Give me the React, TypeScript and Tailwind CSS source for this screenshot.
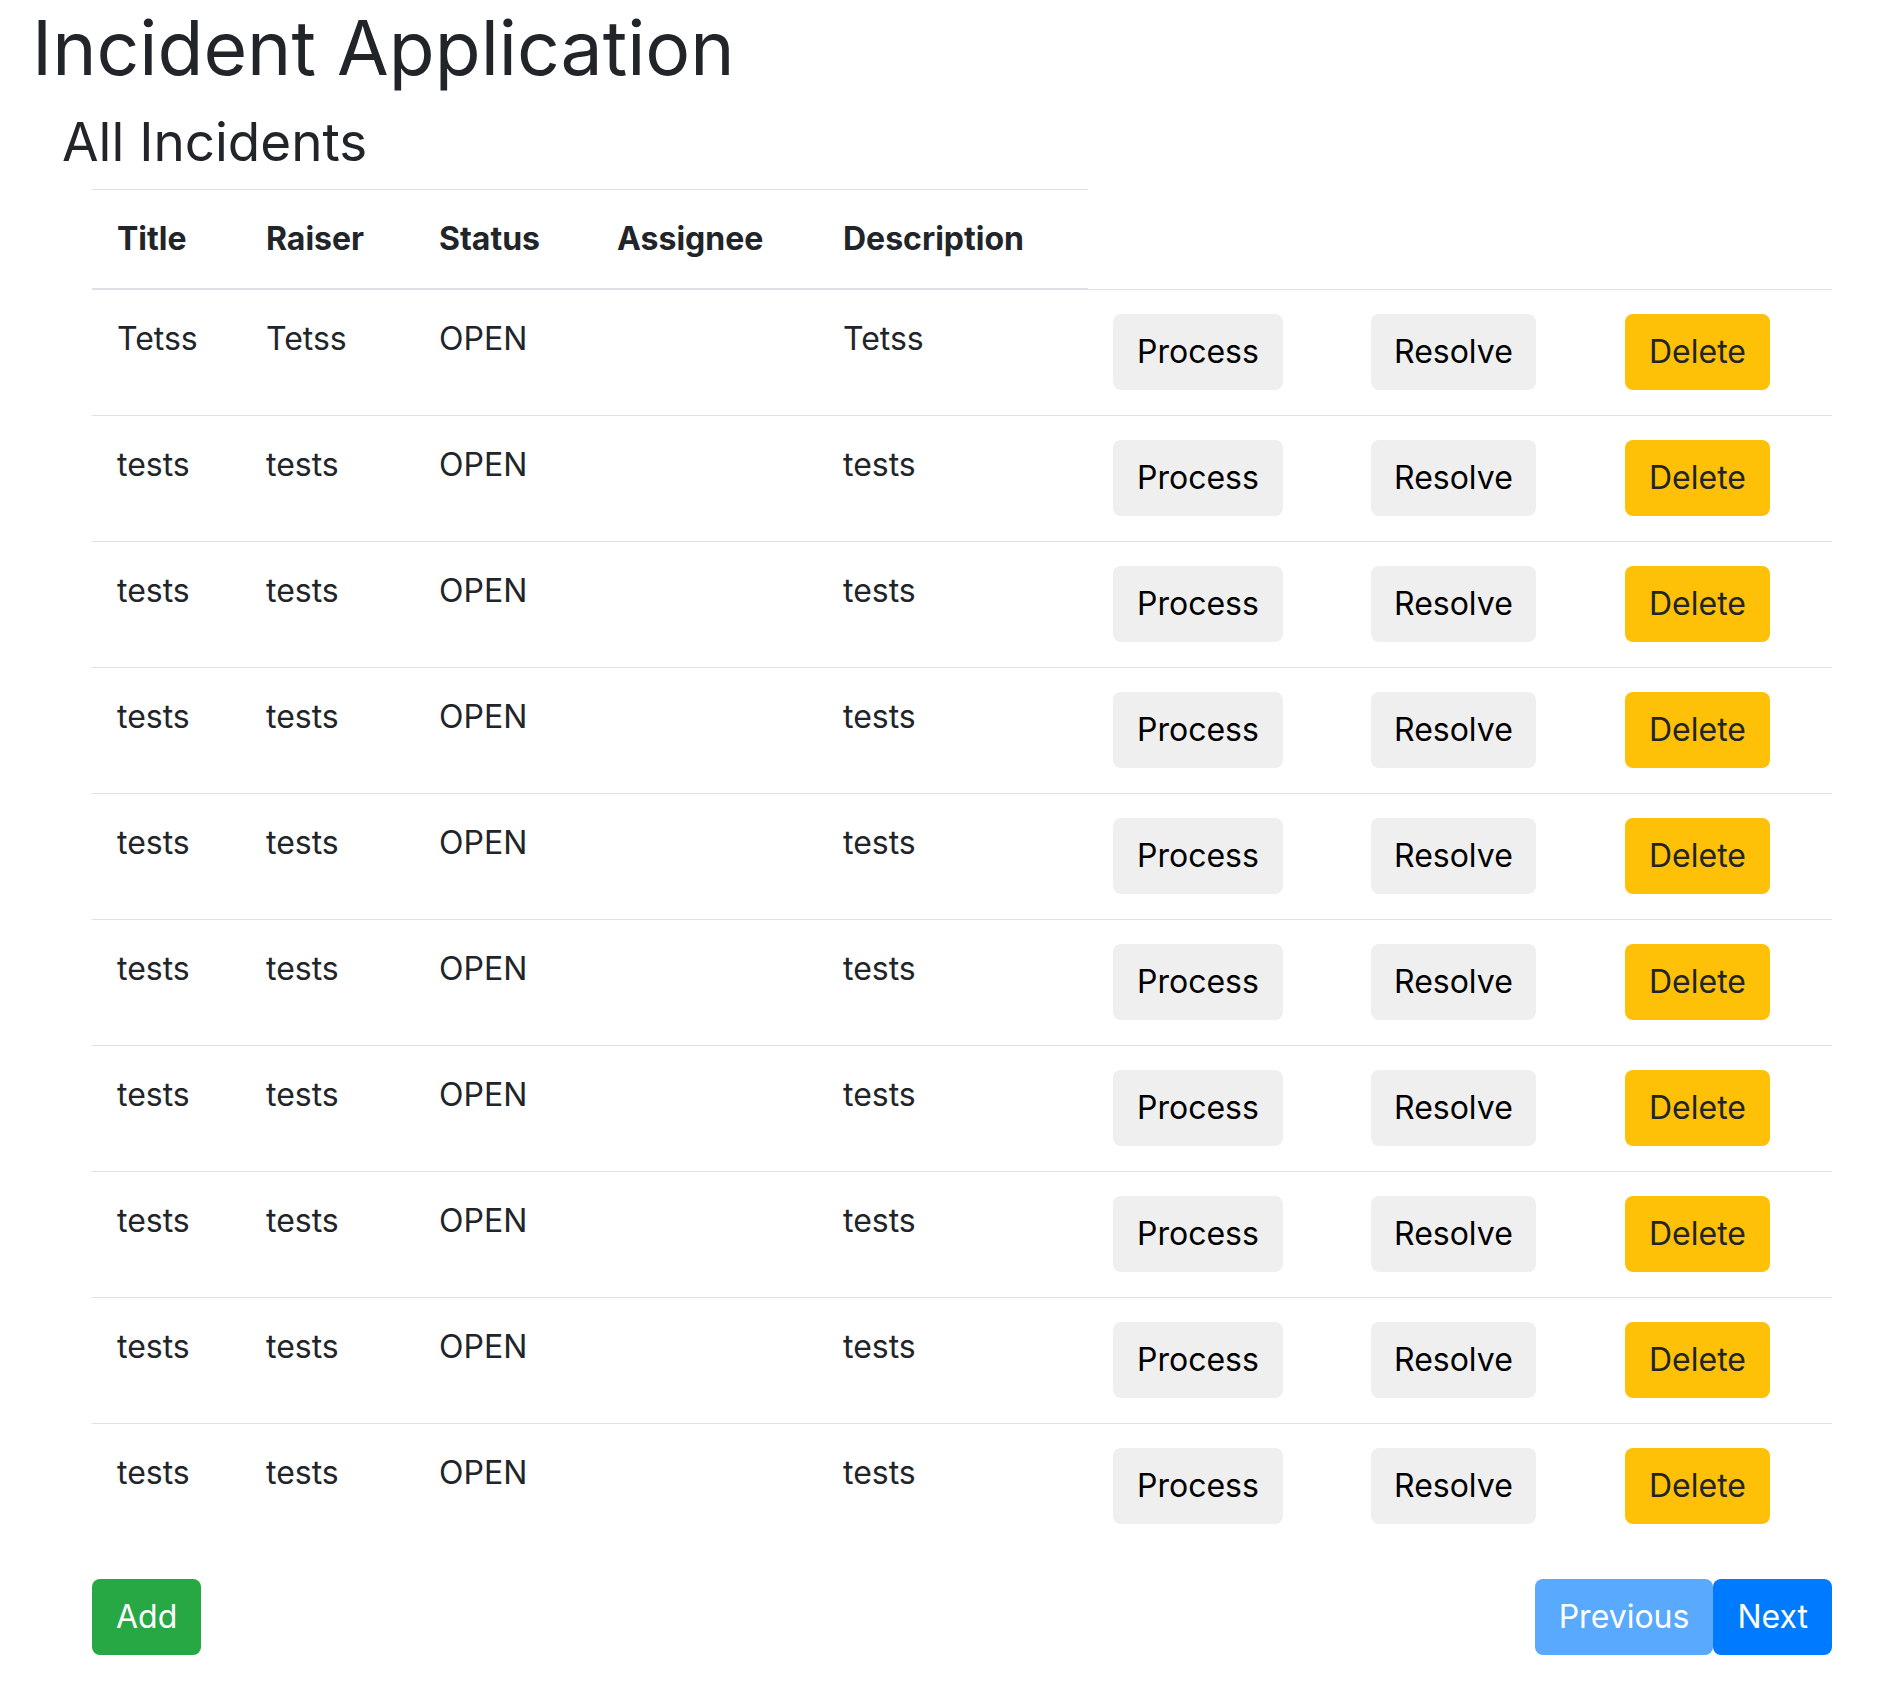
const incidents = [
  { title: 'Tetss', raiser: 'Tetss', status: 'OPEN', assignee: '', description: 'Tetss' },
  ...Array.from({ length: 9 }, () => ({
    title: 'tests',
    raiser: 'tests',
    status: 'OPEN',
    assignee: '',
    description: 'tests',
  })),
];

const headers = ['Title', 'Raiser', 'Status', 'Assignee', 'Description'];
const colWidths = ['w-[149px]', 'w-[173px]', 'w-[178px]', 'w-[226px]', 'w-[270px]', 'w-[258px]', 'w-[254px]', 'w-[232px]'];

export default function App() {
  return (
    <div className="min-h-screen bg-white px-[32px] text-[32px] leading-[50px] text-[#212529] font-[Inter,'Liberation_Sans',sans-serif]">
      <h1 className="text-[75px] leading-[95px] font-normal mb-[15px]">Incident Application</h1>

      <div className="pl-[30px]">
        <h3 className="text-[53px] leading-[64px] font-normal mb-[15px]">All Incidents</h3>

        <div className="pl-[30px]">
          <table className="w-[1740px] table-fixed border-collapse">
            <colgroup>
              {colWidths.map((w, i) => (
                <col key={i} className={w} />
              ))}
            </colgroup>
            <thead>
              <tr>
                {headers.map(h => (
                  <th
                    key={h}
                    className="text-left font-bold px-[25px] py-[24px] border-t border-b-2 border-[#dee2e6] align-bottom"
                  >
                    {h}
                  </th>
                ))}
              </tr>
            </thead>
            <tbody>
              {incidents.map((row, i) => (
                <tr key={i}>
                  <td className="px-[25px] pt-[24px] pb-[25px] border-t border-[#dee2e6] align-top">{row.title}</td>
                  <td className="px-[25px] pt-[24px] pb-[25px] border-t border-[#dee2e6] align-top">{row.raiser}</td>
                  <td className="px-[25px] pt-[24px] pb-[25px] border-t border-[#dee2e6] align-top">{row.status}</td>
                  <td className="px-[25px] pt-[24px] pb-[25px] border-t border-[#dee2e6] align-top">{row.assignee}</td>
                  <td className="px-[25px] pt-[24px] pb-[25px] border-t border-[#dee2e6] align-top">{row.description}</td>
                  <td className="px-[25px] pt-[24px] pb-[25px] border-t border-[#dee2e6] align-top">
                    <button className="bg-[#efefef] text-black px-[23px] py-[12px] border border-transparent rounded-[8px]">
                      Process
                    </button>
                  </td>
                  <td className="px-[25px] pt-[24px] pb-[25px] border-t border-[#dee2e6] align-top">
                    <button className="bg-[#efefef] text-black px-[22px] py-[12px] border border-transparent rounded-[8px]">
                      Resolve
                    </button>
                  </td>
                  <td className="px-[25px] pt-[24px] pb-[25px] border-t border-[#dee2e6] align-top">
                    <button className="bg-[#ffc107] text-[#212529] px-[23px] py-[12px] border border-transparent rounded-[8px]">
                      Delete
                    </button>
                  </td>
                </tr>
              ))}
            </tbody>
          </table>

          {/* footer buttons */}
          <div className="w-[1740px] mt-[30px] flex justify-between items-center">
            <button className="bg-[#28a745] text-white px-[23px] py-[12px] border border-transparent rounded-[8px]">
              Add
            </button>
            <div className="flex">
              <button className="bg-[#59a9ff] text-white px-[23px] py-[12px] border border-transparent rounded-[8px]">
                Previous
              </button>
              <button className="bg-[#007bff] text-white px-[23px] py-[12px] border border-transparent rounded-[8px]">
                Next
              </button>
            </div>
          </div>
        </div>
      </div>
    </div>
  );
}
